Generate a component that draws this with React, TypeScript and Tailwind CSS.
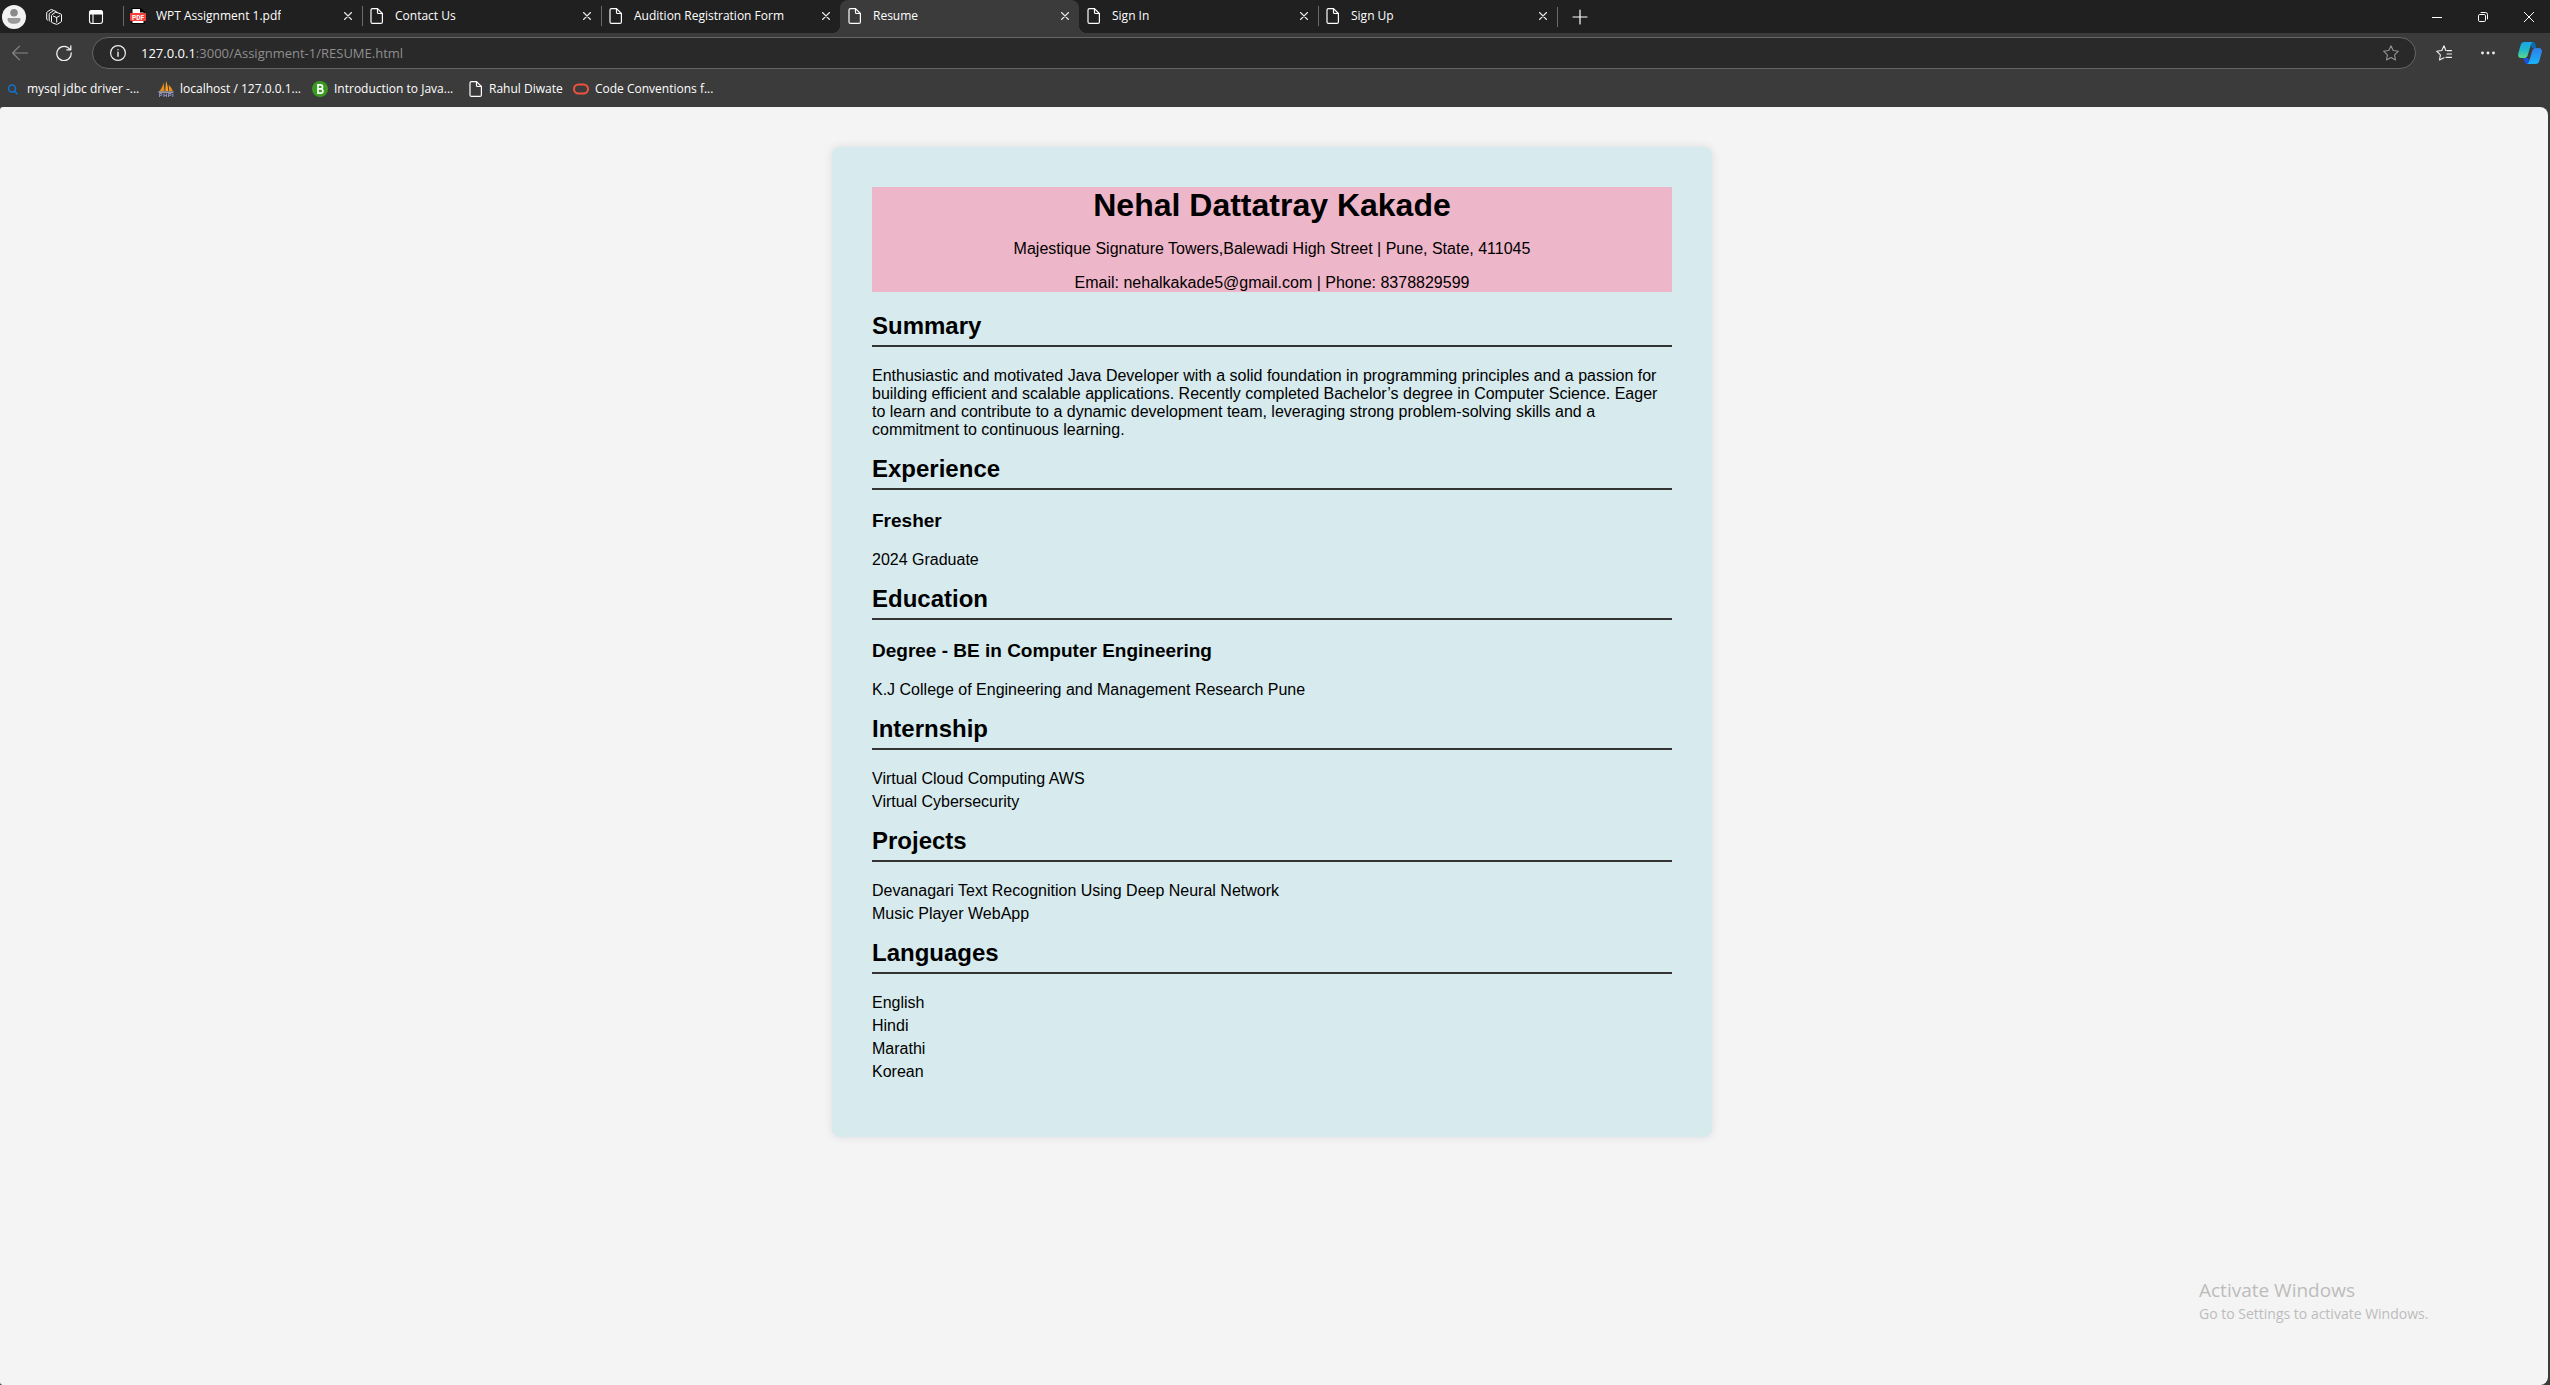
import React from 'react';

type TabInfo = { title: string; pdf?: boolean; active?: boolean; line?: boolean };

const tabs: TabInfo[] = [
  { title: 'WPT Assignment 1.pdf', pdf: true, line: true },
  { title: 'Contact Us', line: true },
  { title: 'Audition Registration Form', line: true },
  { title: 'Resume', active: true },
  { title: 'Sign In' },
  { title: 'Sign Up', line: true },
];

const stroke = { fill: 'none', stroke: 'currentColor', strokeLinecap: 'round', strokeLinejoin: 'round' } as const;

function PageIcon() {
  return (
    <svg className="h-4 w-4 shrink-0" viewBox="0 0 16 16" {...stroke} strokeWidth="1.2">
      <path d="M3.5.6h5L13.4 5.5v8.400a1.500 1.500 0 0 1-1.500 1.500H3.500A1.500 1.500 0 0 1 2 13.900V2.100A1.500 1.500 0 0 1 3.500.6z" />
      <path d="M8.500.8v3.700a1 1 0 0 0 1 1h3.700" />
    </svg>
  );
}

function PdfIcon() {
  return (
    <svg className="h-4 w-4 shrink-0" viewBox="0 0 16 16">
      <path d="M1.500 0h9.500l3.500 3.500V16h-13z" fill="#000" />
      <path d="M2.500 1H10v3.500h3.500V15h-11z" fill="#fff" />
      <rect x="0" y="5" width="16" height="8" rx="1" fill="#f8403c" />
      <text x="8" y="11.500" textAnchor="middle" fontSize="6.500" fontWeight="700" fill="#fff" fontFamily="Roboto, sans-serif">PDF</text>
    </svg>
  );
}

function CloseIcon() {
  return (
    <svg className="h-2 w-2" viewBox="0 0 8 8" {...stroke} strokeWidth="1.200">
      <path d="M.5.5l7 7M7.500.5l-7 7" />
    </svg>
  );
}

function Tab({ tab }: { tab: TabInfo }) {
  return (
    <div
      className={
        tab.active
          ? 'relative flex h-full w-[239px] min-w-0 items-center rounded-t-lg bg-[#3b3b3b] pb-px pl-[7px] pr-[10px]'
          : 'relative flex h-full w-[239px] min-w-0 items-center pb-px pl-[7px] pr-[10px]'
      }
    >
      {tab.line && <span className="absolute left-0 top-[6px] h-5 w-px bg-[#6a6a6a]" />}
      {tab.active && (
        <>
          <span className="absolute -left-2 bottom-0 h-2 w-2 bg-[radial-gradient(circle_at_0_0,transparent_8px,#3b3b3b_8px)]" />
          <span className="absolute -right-2 bottom-0 h-2 w-2 bg-[radial-gradient(circle_at_100%_0,transparent_8px,#3b3b3b_8px)]" />
        </>
      )}
      <button className="flex min-w-0 flex-1 items-center gap-[10px] text-left text-white">
        {tab.pdf ? <PdfIcon /> : <PageIcon />}
        <span className="truncate text-xs">{tab.title}</span>
      </button>
      <button aria-label={'Close ' + tab.title} className="text-[#e6e6e6]">
        <CloseIcon />
      </button>
    </div>
  );
}

function TabStrip() {
  return (
    <div className="flex h-[33px] items-center bg-[#202020] text-white">
      <div className="flex w-[123px] shrink-0 items-center pl-[2px]">
        <button aria-label="Profile" className="h-6 w-6">
          <svg viewBox="0 0 24 24">
            <circle cx="12" cy="12" r="12" fill="#f3f3f3" />
            <circle cx="12" cy="7.800" r="3.800" fill="#8b8b8b" />
            <path d="M6.500 13h11c.6 0 1 .5 1 1.200 0 2.800-2.700 4.600-6.500 4.600s-6.500-1.800-6.500-4.600c0-.7.4-1.200 1-1.200z" fill="#9b9b9b" />
          </svg>
        </button>
        <button aria-label="Workspaces" className="ml-5 h-4 w-4">
          <svg viewBox="0 0 16 16" {...stroke} strokeWidth="1">
            <path d="M10.100 3.200L14.900 5c.4.1.6.5.6.9v6.200c0 .4-.2.8-.6 1l-3.700 2.200a1 1 0 0 1-.9 0L6.200 13.700a1 1 0 0 1-.7-.9V6.700c0-.4.2-.8.500-1l3.300-2.300c.2-.2.5-.3.8-.2z" />
            <path d="M7.500 7.200l3.200 1.300 2.800-1.600M10.700 8.500v4.700" />
            <path d="M3.900 12.300a1.100 1.100 0 0 1-.7-1V5.200c0-.4.2-.8.600-1.100l3.400-2.300c.3-.2.600-.2.900-.1l1.900.7" />
            <path d="M1.400 11a1.100 1.100 0 0 1-.7-1V4c0-.5.2-.9.600-1.200L4.700.7c.3-.2.600-.2.900-.1l1.600.6" />
          </svg>
        </button>
        <button aria-label="Tab actions" className="ml-[26px] h-4 w-4">
          <svg viewBox="0 0 16 16" {...stroke} strokeWidth="1.100">
            <rect x="1.500" y="1.500" width="13" height="13" rx="2.500" />
            <path d="M1.500 5V4A2.500 2.500 0 0 1 4 1.500h8A2.500 2.500 0 0 1 14.500 4v1z" fill="#fff" />
            <path d="M5 5v9.500" />
          </svg>
        </button>
      </div>
      <div className="flex h-full min-w-0">
        {tabs.map((t) => (
          <Tab key={t.title} tab={t} />
        ))}
      </div>
      <div className="flex h-5 items-center border-l border-[#6a6a6a] pl-[14px]">
        <button aria-label="New tab" className="h-4 w-4">
          <svg viewBox="0 0 16 16" {...stroke} strokeWidth="1.200">
            <path d="M8 1v14M1 8h14" />
          </svg>
        </button>
      </div>
      <div className="ml-auto flex items-center gap-9 pr-4">
        <button aria-label="Minimize" className="h-[10px] w-[10px]">
          <svg viewBox="0 0 10 10" stroke="currentColor" fill="none"><path d="M0 5.500h10" /></svg>
        </button>
        <button aria-label="Restore" className="h-[10px] w-[10px]">
          <svg viewBox="0 0 10 10" stroke="currentColor" fill="none">
            <rect x=".5" y="2.500" width="7" height="7" rx="1.300" />
            <path d="M2.700.5h4.800a2 2 0 0 1 2 2v4.800" />
          </svg>
        </button>
        <button aria-label="Close window" className="h-[10px] w-[10px]">
          <svg viewBox="0 0 10 10" stroke="currentColor" fill="none"><path d="M0 0l10 10M10 0L0 10" /></svg>
        </button>
      </div>
    </div>
  );
}

function Copilot() {
  return (
    <svg viewBox="0 0 24 24">
      <defs>
        <linearGradient id="cpA" x1="0" y1="0" x2="0" y2="1">
          <stop offset="0" stopColor="#18a5e8" />
          <stop offset=".5" stopColor="#22b8c8" />
          <stop offset="1" stopColor="#58d98a" />
        </linearGradient>
        <linearGradient id="cpB" x1="0" y1="0" x2="0" y2="1">
          <stop offset="0" stopColor="#2f7de8" />
          <stop offset="1" stopColor="#18b4fa" />
        </linearGradient>
      </defs>
      <path d="M11 1h3.500c1.800 0 2.600 1 3.100 2.700L18.500 7H14z" fill="#0a6cae" />
      <path d="M5 17h5l3 6H9.500c-1.800 0-2.600-1-3.100-2.700z" fill="#1c50d8" />
      <path d="M6.500 1H15c-1.300.5-1.900 1.700-2.400 3.400L9.800 14c-.6 2-1.600 3-3.500 3H3.200C.6 17-.3 15 .3 12.500L2.600 4.200C3.200 2 4.400 1 6.500 1z" fill="url(#cpA)" />
      <path d="M17.500 23H9c1.300-.5 1.900-1.700 2.400-3.400l2.800-9.600c.6-2 1.600-3 3.500-3h3.100c2.600 0 3.500 2 2.900 4.500l-2.300 8.300c-.6 2.200-1.800 3.200-3.900 3.200z" fill="url(#cpB)" />
    </svg>
  );
}

function AddressRow() {
  return (
    <div className="flex items-center pl-3 pr-2 pt-1 text-[#f0f0f0]">
      <button aria-label="Back" className="h-4 w-4 text-[#868686]">
        <svg viewBox="0 0 16 16" {...stroke} strokeWidth="1.200"><path d="M15.500 8H.7M7.500 1.200L.7 8l6.800 6.800" /></svg>
      </button>
      <button aria-label="Refresh" className="ml-7 h-4 w-4">
        <svg viewBox="0 0 16 16" {...stroke} strokeWidth="1.300">
          <path d="M14 4.500A7.200 7.200 0 1 0 15.200 8M14.800.8v4h-4" />
        </svg>
      </button>
      <div className="ml-5 flex h-8 flex-1 items-center rounded-full border border-[#666] bg-[#292929] pl-[17px] pr-4">
        <svg className="h-4 w-4" viewBox="0 0 16 16" {...stroke} strokeWidth="1.200">
          <circle cx="8" cy="8" r="7.400" />
          <path d="M8 7.300v4M8 4.600v.2" strokeWidth="1.400" />
        </svg>
        <label className="relative ml-[15px] flex h-5 flex-1 items-center">
          <input
            aria-label="Address"
            readOnly
            value="127.0.0.1:3000/Assignment-1/RESUME.html"
            className="w-full bg-transparent text-[13px] leading-5 text-transparent outline-none"
          />
          <span className="pointer-events-none absolute left-0 text-[13px] leading-5 text-[#8f8f8f]">
            <span className="text-white">127.0.0.1</span>:3000/Assignment-1/RESUME.html
          </span>
        </label>
        <button aria-label="Add to favorites" className="h-4 w-4 text-[#929292]">
          <svg viewBox="0 0 16 16" {...stroke} strokeWidth="1.100">
            <path d="M8 .8l2.200 4.700 5.200.7-3.800 3.600.9 5.200L8 12.500 3.500 15l.9-5.200L.6 6.200l5.200-.7z" />
          </svg>
        </button>
      </div>
      <button aria-label="Favorites" className="ml-5 h-4 w-4">
        <svg viewBox="0 0 16 16" {...stroke} strokeWidth="1.100">
          <path d="M9.800 5.500L8 .8 5.800 5.500.6 6.200l3.800 3.600-.9 5.200L8 12.700M11 5.600h4.500M11 9h4.500M10 12.400h5.500" />
        </svg>
      </button>
      <button aria-label="More" className="ml-7 h-4 w-4">
        <svg viewBox="0 0 16 16" fill="currentColor">
          <circle cx="2.500" cy="8" r="1.400" /><circle cx="8" cy="8" r="1.400" /><circle cx="13.500" cy="8" r="1.400" />
        </svg>
      </button>
      <button aria-label="Copilot" className="ml-[22px] h-6 w-6"><Copilot /></button>
    </div>
  );
}

function BookmarksRow() {
  return (
    <nav className="flex h-[38px] items-center pt-[2px] pl-[7px] text-xs text-white">
      <a href="#mysql" className="flex min-w-[151px] items-center gap-[9px]">
        <svg className="h-[11px] w-[11px]" viewBox="0 0 11 11" fill="none" stroke="#1373d1" strokeWidth="1.500">
          <circle cx="5" cy="4.500" r="3.500" /><path d="M7.300 7L10.500 10.300" />
        </svg>
        mysql jdbc driver -...
      </a>
      <a href="#localhost" className="flex min-w-[154px] items-center gap-[6px]">
        <svg className="h-4 w-4" viewBox="0 0 16 16">
          <path d="M1 10.500C3 8.500 4.800 5 5.800 1.500L6.500 10z" fill="#e58a1c" />
          <path d="M7.300 10L8 0c1.200 2.500 2 6 2.200 10z" fill="#f7a028" />
          <path d="M11 10l-.3-6c2 1.500 3.300 3.500 4 6z" fill="#f29111" />
          <path d="M0 10.500h16l-1 1.200H1z" fill="#b9b9d0" />
          <path d="M1.500 16v-3.500h2.300v1.800H1.500M6 16v-3.500M6 14.300h2.500M8.500 12.500V16M10.500 16v-3.500H13v1.800h-2.500M14.800 12.500V16" stroke="#8d8fc0" fill="none" />
        </svg>
        localhost / 127.0.0.1...
      </a>
      <a href="#java" className="flex min-w-[156px] items-center gap-[6px]">
        <svg className="h-4 w-4" viewBox="0 0 16 16">
          <circle cx="8" cy="8" r="8" fill="#3a9a20" />
          <path d="M6 3.800h2.500a2 2 0 0 1 0 4.100H6zM6 7.900h2.800a2.100 2.100 0 0 1 0 4.300H6z" fill="none" stroke="#fff" strokeWidth="1.700" />
        </svg>
        Introduction to Java...
      </a>
      <a href="#rahul" className="flex min-w-[105px] items-center gap-[5px]">
        <PageIcon />
        Rahul Diwate
      </a>
      <a href="#code" className="flex items-center gap-[6px]">
        <svg className="h-4 w-4" viewBox="0 0 16 16" fill="none" stroke="#f0523d" strokeWidth="2">
          <rect x="1" y="3.500" width="14" height="9" rx="4.500" />
        </svg>
        Code Conventions f...
      </a>
    </nav>
  );
}

function Section({ title, children }: { title: string; children: React.ReactNode }) {
  return (
    <section className="mb-4">
      <h2 className="mb-5 border-b-2 border-[#333] pb-[5px] text-2xl leading-7 font-bold">{title}</h2>
      {children}
    </section>
  );
}

function Entry({ title, text }: { title: string; text: string }) {
  return (
    <>
      <h3 className="mb-[19px] text-[19px] leading-[22px] font-bold">{title}</h3>
      <p>{text}</p>
    </>
  );
}

function Items({ items }: { items: string[] }) {
  return (
    <ul className="space-y-[5px]">
      {items.map((i) => (
        <li key={i}>{i}</li>
      ))}
    </ul>
  );
}

export default function App() {
  return (
    <div className="flex min-h-screen flex-col bg-[#3b3b3b] font-['Open_Sans',sans-serif]">
      <TabStrip />
      <AddressRow />
      <BookmarksRow />
      <main className="relative mr-[2px] flex-1 rounded-l-[3px] rounded-r-lg bg-[#f4f4f4] pt-10 pr-1 pb-10">
        <article className="mx-auto max-w-[880px] rounded-lg bg-[#d7eaed] p-10 font-['Liberation_Sans',Arial,sans-serif] text-base leading-[18px] text-black shadow-[0_0_10px_rgba(0,0,60,0.1)]">
          <header className="mb-5 space-y-4 bg-[#eeb6c9] text-center">
            <h1 className="text-[32px] leading-[37px] font-bold">Nehal Dattatray Kakade</h1>
            <p>Majestique Signature Towers,Balewadi High Street | Pune, State, 411045</p>
            <p>Email: nehalkakade5@gmail.com | Phone: 8378829599</p>
          </header>
          <Section title="Summary">
            <p>
              Enthusiastic and motivated Java Developer with a solid foundation in programming principles and a passion
              for building efficient and scalable applications. Recently completed Bachelor’s degree in Computer
              Science. Eager to learn and contribute to a dynamic development team, leveraging strong problem-solving
              skills and a commitment to continuous learning.
            </p>
          </Section>
          <Section title="Experience">
            <Entry title="Fresher" text="2024 Graduate" />
          </Section>
          <Section title="Education">
            <Entry title="Degree - BE in Computer Engineering" text="K.J College of Engineering and Management Research Pune" />
          </Section>
          <Section title="Internship">
            <Items items={['Virtual Cloud Computing AWS', 'Virtual Cybersecurity']} />
          </Section>
          <Section title="Projects">
            <Items items={['Devanagari Text Recognition Using Deep Neural Network', 'Music Player WebApp']} />
          </Section>
          <Section title="Languages">
            <Items items={['English', 'Hindi', 'Marathi', 'Korean']} />
          </Section>
        </article>
        <aside className="absolute right-[106px] bottom-[61px] w-[243px] text-[#bcbcbc]">
          <p className="text-[19px] leading-7">Activate Windows</p>
          <p className="text-sm leading-5 whitespace-nowrap">Go to Settings to activate Windows.</p>
        </aside>
      </main>
    </div>
  );
}
